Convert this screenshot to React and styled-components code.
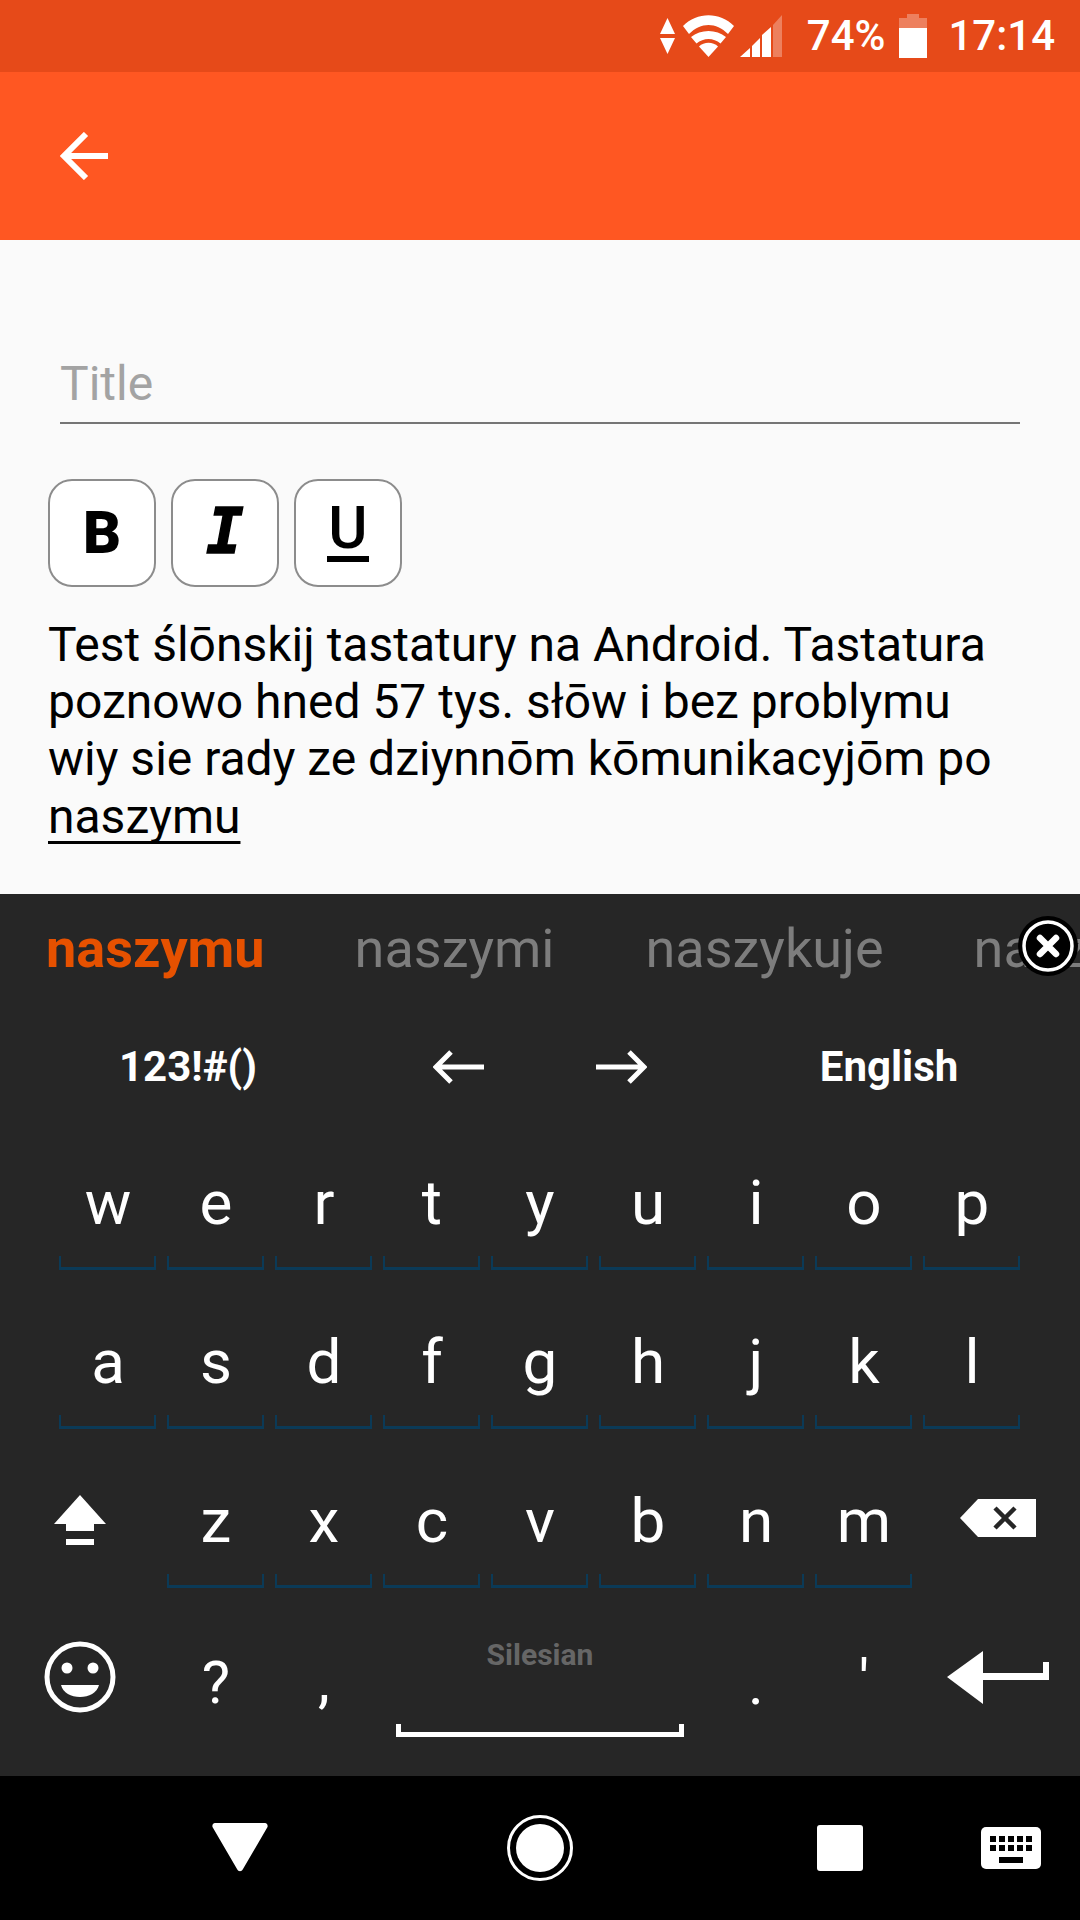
import React from 'react';
import styled, { createGlobalStyle } from 'styled-components';

const Global = createGlobalStyle`
  html, body { margin: 0; padding: 0; background: #fafafa; }
  * { box-sizing: border-box; }
  body { font-family: Roboto, "Noto Sans", sans-serif; }
`;

const Screen = styled.div`
  width: 1080px; height: 1920px; display: flex; flex-direction: column; overflow: hidden; position: relative;
`;
const StatusBar = styled.div`
  height: 72px; background: #e64a19; display: flex; align-items: center; justify-content: flex-end;
  padding-right: 25px; color: #fff; flex: none;
`;
const StatusText = styled.span`
  font-size: 42px; font-weight: 500; line-height: 72px; margin: ${p => p.$m || 0};
`;
const StatusIcon = styled.svg`
  display: block; flex: none; margin: ${p => p.$m || 0};
`;
const AppBar = styled.div`
  height: 168px; background: #ff5722; display: flex; align-items: center; padding-left: 60px; flex: none;
`;
const Content = styled.div`
  height: 654px; background: #fafafa; flex: none; padding: 112px 48px 0;
`;
const TitleField = styled.div`
  margin: 0 12px; height: 72px; border-bottom: 2px solid #757575; color: #a3a3a3;
  font-size: 48px; line-height: 64px;
`;
const FormatBar = styled.div`
  display: flex; gap: 15px; margin-top: 55px;
`;
const FormatButton = styled.div`
  width: 108px; height: 108px; background: #fff; border: 2.5px solid #8c8c8c; border-radius: 24px;
  display: flex; align-items: center; justify-content: center; color: #000; padding-bottom: 2px;
`;
const BoldMark = styled.span`
  font: 900 59px/1 Roboto, sans-serif;
`;
const ItalicMark = styled.span`
  font: italic 700 62px/1 "DejaVu Sans Mono", monospace; -webkit-text-stroke: 1.5px #000;
`;
const UnderlineMark = styled.span`
  font: 500 60px/50px Roboto, sans-serif; border-bottom: 6px solid #000; padding: 0 1px 3px;
`;
const Paragraph = styled.p`
  margin: 29px 0 0; font-size: 48px; line-height: 57.2px; color: #000;
`;
const Underlined = styled.span`
  text-decoration: underline; text-decoration-thickness: 3px; text-underline-offset: 8px;
  text-decoration-skip-ink: none;
`;
const Keyboard = styled.div`
  height: 882px; background: #262626; flex: none; display: flex; flex-direction: column; position: relative;
`;
const Suggestions = styled.div`
  height: 110px; flex: none; display: flex; align-items: center; overflow: hidden; white-space: nowrap;
  padding-left: 46px; font-size: 54px; padding-bottom: 2px;
`;
const Suggestion = styled.span`
  color: ${p => (p.$active ? '#e65100' : '#7d7d7d')}; font-weight: ${p => (p.$active ? 700 : 400)};
  margin-right: ${p => p.$gap || 0}px; flex: none;
`;
const CloseBadge = styled.div`
  position: absolute; left: 1018px; top: 22px; width: 60px; height: 60px; border-radius: 50%;
  background: #000; display: flex; align-items: center; justify-content: center;
`;
const ToolRow = styled.div`
  height: 107px; flex: none; display: grid; grid-template-columns: 376px 162px 162px 1fr; align-items: center;
  color: #fff; font-size: 42px; font-weight: 700; padding-top: 18px;
`;
const ToolCell = styled.div`
  display: flex; justify-content: center; align-items: center; padding-right: ${p => p.$pr || 0}px;
  padding-left: ${p => p.$pl || 0}px;
`;
const KeyRow = styled.div`
  height: 159px; flex: none; display: flex; padding: 0 ${p => p.$pad || 0}px;
`;
const Key = styled.div`
  width: 108px; flex: none; position: relative; display: flex; justify-content: center; color: #fff;
  font-size: 62px; line-height: 60px; padding-top: 62px;
  ${p => p.$marked && `
    &::after {
      content: ''; position: absolute; left: 5px; right: 6px; bottom: 0; height: 11px;
      border: 2px solid #0b3a57; border-bottom-width: 3px; border-top: 0;
    }
  `}
`;
const EdgeCell = styled.div`
  width: 162px; flex: none; position: relative;
`;
const PlacedIcon = styled.svg`
  position: absolute; left: ${p => p.$x}px; top: ${p => p.$y}px; display: block;
`;
const BottomRow = styled.div`
  flex: 1; display: flex; position: relative;
`;
const SpaceKey = styled.div`
  width: 324px; flex: none; display: flex; flex-direction: column; align-items: center; padding-top: 49px;
  color: #666; font-size: 30px; font-weight: 700; line-height: 36px;
`;
const SpaceBar = styled.div`
  width: 288px; height: 13px; margin-top: 51px; border: 5px solid #fff; border-top: 0;
`;
const SmallGlyph = styled.div`
  width: 108px; flex: none; display: flex; justify-content: center; color: #fff; font-size: 60px; line-height: 60px;
  padding-top: ${p => p.$top || 48}px;
`;
const NavBar = styled.div`
  flex: 1; background: #000; position: relative;
`;

const rows1 = ['w','e','r','t','y','u','i','o','p'];
const rows2 = ['a','s','d','f','g','h','j','k','l'];
const rows3 = ['z','x','c','v','b','n','m'];

export default function App() {
  return (
    <Screen>
      <Global />
      <StatusBar>
        <StatusIcon $m="0 8px 0 0" width="15" height="36" viewBox="0 0 15 36">
          <path d="M7.5 0L15 16H0zM0 20h15L7.5 36z" fill="#fff" />
        </StatusIcon>
        <StatusIcon $m="0 6px 0 0" width="51" height="42" viewBox="0 0 51 42">
          <path d="M25.500 42L16 31.500c5-5 14-5 19 0z" fill="#fff" />
          <path d="M13.500 28.500L8 22c9.500-8 25.500-8 35 0l-5.500 6.500c-7-6-17-6-24 0z" fill="#fff" />
          <path d="M6 19L0 11C14-3.500 37-3.500 51 11l-6 8C33 7 18 7 6 19z" fill="#fff" />
        </StatusIcon>
        <StatusIcon $m="0 25px 0 0" width="42" height="42" viewBox="0 0 42 42">
          <path d="M33 10L42 0V42H33z" fill="#fff" opacity="0.3" />
          <path d="M0 42L10 33V42zM12 42V31L20 23V42zM22 42V20L31 12V42z" fill="#fff" />
        </StatusIcon>
        <StatusText $m="0 14px 0 0">74%</StatusText>
        <StatusIcon $m="0 21px 0 0" width="28" height="44" viewBox="0 0 28 44">
          <path d="M8 0h12v4h8v10H0V4h8z" fill="#fff" opacity="0.3" />
          <path d="M0 14h28v30H0z" fill="#fff" />
        </StatusIcon>
        <StatusText>17:14</StatusText>
      </StatusBar>
      <AppBar>
        <svg width="48" height="48" viewBox="0 0 48 48">
          <path d="M48 24H5M26 2L4 24l22 22" fill="none" stroke="#fff" strokeWidth="6" />
        </svg>
      </AppBar>
      <Content>
        <TitleField>Title</TitleField>
        <FormatBar>
          <FormatButton><BoldMark>B</BoldMark></FormatButton>
          <FormatButton><ItalicMark>I</ItalicMark></FormatButton>
          <FormatButton><UnderlineMark>U</UnderlineMark></FormatButton>
        </FormatBar>
        <Paragraph>
          Test ślōnskij tastatury na Android. Tastatura poznowo hned 57 tys. słōw i bez problymu wiy sie rady ze dziynnōm kōmunikacyjōm po <Underlined>naszymu</Underlined>
        </Paragraph>
      </Content>
      <Keyboard>
        <Suggestions>
          <Suggestion $active $gap={90}>naszymu</Suggestion>
          <Suggestion $gap={91}>naszymi</Suggestion>
          <Suggestion $gap={90}>naszykuje</Suggestion>
          <Suggestion>naszym</Suggestion>
        </Suggestions>
        <CloseBadge>
          <svg width="54" height="54" viewBox="0 0 54 54">
            <circle cx="27" cy="27" r="24" fill="none" stroke="#fff" strokeWidth="3.500" />
            <path d="M19 19l16 16M35 19L19 35" stroke="#fff" strokeWidth="6.500" strokeLinecap="round" />
          </svg>
        </CloseBadge>
        <ToolRow>
          <ToolCell>123!#()</ToolCell>
          <ToolCell $pl={3}>
            <svg width="52" height="34" viewBox="0 0 52 34"><path d="M51 17H4M18 2L3 17l15 15" fill="none" stroke="#fff" strokeWidth="5" /></svg>
          </ToolCell>
          <ToolCell $pl={3}>
            <svg width="52" height="34" viewBox="0 0 52 34"><path d="M1 17h47M34 2l15 15-15 15" fill="none" stroke="#fff" strokeWidth="5" /></svg>
          </ToolCell>
          <ToolCell $pr={2}>English</ToolCell>
        </ToolRow>
        <KeyRow $pad={54}>{rows1.map(k => <Key key={k} $marked>{k}</Key>)}</KeyRow>
        <KeyRow $pad={54}>{rows2.map(k => <Key key={k} $marked>{k}</Key>)}</KeyRow>
        <KeyRow>
          <EdgeCell>
            <PlacedIcon $x={54} $y={66} width="52" height="50" viewBox="0 0 52 50">
              <path d="M26 0l26 29H40v7H12v-7H0zM12 44h28v6H12z" fill="#fff" />
            </PlacedIcon>
          </EdgeCell>
          {rows3.map(k => <Key key={k} $marked>{k}</Key>)}
          <EdgeCell>
            <PlacedIcon $x={42} $y={70} width="76" height="38" viewBox="0 0 76 38">
              <path d="M18 0h58v38H18L0 19z" fill="#fff" />
              <path d="M35 9l20 20M55 9L35 29" stroke="#262626" strokeWidth="4.500" />
            </PlacedIcon>
          </EdgeCell>
        </KeyRow>
        <BottomRow>
          <EdgeCell>
            <PlacedIcon $x={44} $y={53} width="72" height="72" viewBox="0 0 72 72">
              <circle cx="36" cy="36" r="33" fill="none" stroke="#fff" strokeWidth="5" />
              <circle cx="23" cy="27" r="5.500" fill="#fff" />
              <circle cx="49" cy="27" r="5.500" fill="#fff" />
              <path d="M17 44h38c-2 8-10 12-19 12s-17-4-19-12z" fill="#fff" />
            </PlacedIcon>
          </EdgeCell>
          <SmallGlyph $top={65}>?</SmallGlyph>
          <SmallGlyph $top={63}>,</SmallGlyph>
          <SpaceKey>
            Silesian
            <SpaceBar />
          </SpaceKey>
          <SmallGlyph $top={66}>.</SmallGlyph>
          <SmallGlyph $top={64}>'</SmallGlyph>
          <EdgeCell>
            <PlacedIcon $x={29} $y={63} width="102" height="53" viewBox="0 0 102 53">
              <path d="M36 0v22h60V11h6v18H36v24L0 26z" fill="#fff" />
            </PlacedIcon>
          </EdgeCell>
        </BottomRow>
      </Keyboard>
      <NavBar>
        <PlacedIcon $x={212} $y={47} width="56" height="49" viewBox="0 0 56 49">
          <path d="M3 0h50c2 0 3 2 2.500 4L31 46c-1.500 3-4.500 3-6 0L.5 4C0 2 1 0 3 0z" fill="#fff" />
        </PlacedIcon>
        <PlacedIcon $x={507} $y={39} width="66" height="66" viewBox="0 0 66 66">
          <circle cx="33" cy="33" r="31.500" fill="none" stroke="#fff" strokeWidth="3" />
          <circle cx="33" cy="33" r="24" fill="#fff" />
        </PlacedIcon>
        <PlacedIcon $x={817} $y={49} width="46" height="46" viewBox="0 0 46 46">
          <rect width="46" height="46" rx="3" fill="#fff" />
        </PlacedIcon>
        <PlacedIcon $x={981} $y={51} width="60" height="42" viewBox="0 0 60 42">
          <rect width="60" height="42" rx="5" fill="#fff" />
          <path d="M9 9h6v6H9zM18 9h6v6h-6zM27 9h6v6h-6zM36 9h6v6h-6zM45 9h6v6h-6zM9 18h6v6H9zM18 18h6v6h-6zM27 18h6v6h-6zM36 18h6v6h-6zM45 18h6v6h-6zM18 30h24v6H18z" fill="#000" />
        </PlacedIcon>
      </NavBar>
    </Screen>
  );
}
